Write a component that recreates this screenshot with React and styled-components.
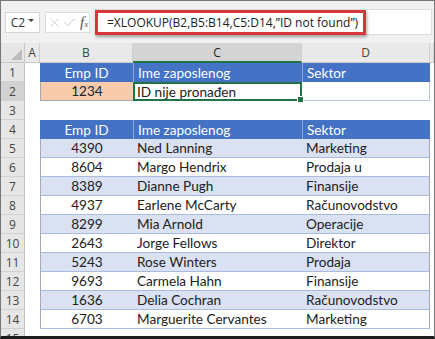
import React from 'react'
import styled, {createGlobalStyle} from 'styled-components'
import {X, Check} from 'lucide-react'

const GlobalStyle = createGlobalStyle`
    html, body {
        margin: 0;
        padding: 0;
        background: #fff;
    }
    * {
        box-sizing: border-box;
    }
`

const Frame = styled.div`
    width: 435px;
    height: 339px;
    overflow: hidden;
    border: 1px solid #777;
    border-bottom: 3px solid #1c1c1c;
    background: #fff;
    display: flex;
    flex-direction: column;
`

const FormulaBar = styled.div`
    height: 42px;
    flex: none;
    display: flex;
    align-items: center;
    padding: 0 2px 0 4px;
    background: #f1f1f1;
`

const NameBox = styled.div`
    width: 35px;
    height: 21px;
    display: flex;
    align-items: center;
    justify-content: center;
    gap: 3px;
    background: #fff;
    border: 1px solid #d6d6d6;
    font-family: 'Open Sans', sans-serif;
    font-size: 12px;
    color: #333;
`

const Caret = styled.span`
    width: 0;
    height: 0;
    border-left: 3px solid transparent;
    border-right: 3px solid transparent;
    border-top: 3px solid #444;
    margin-top: -4px;
`

const Dots = styled.span`
    width: 5px;
    text-align: center;
    color: #b8b8b8;
    font-family: 'DejaVu Sans', sans-serif;
    font-size: 12px;
`

const FxBox = styled.div`
    width: 45px;
    height: 21px;
    display: flex;
    align-items: center;
    padding-left: 1px;
    background: #fff;
    border: 1px solid #dcdcdc;
    color: #c8c8c8;
`

const Fx = styled.span`
    margin-left: 3px;
    font-family: 'Liberation Serif', serif;
    font-style: italic;
    font-size: 15px;
    color: #555;

    small {
        font-size: 9px;
    }
`

const FormulaInput = styled.div`
    flex: 1;
    height: 26px;
    margin-left: 5px;
    display: flex;
    align-items: center;
    background: #fff;
    border: 1px solid #dedede;
`

const Highlight = styled.div`
    height: 25px;
    margin-left: -1px;
    display: flex;
    align-items: center;
    padding: 0 5px 0 9px;
    border: 3px solid #d8363c;
    box-shadow: 1px 2px 3px rgba(0, 0, 0, .35);
    font-family: 'Open Sans', sans-serif;
    font-size: 12px;
    color: #222;
    white-space: nowrap;
`

const Sheet = styled.div`
    display: grid;
    grid-template-columns: 24px 15px 93px 169px 128px 1fr;
    grid-template-rows: 20px;
    grid-auto-rows: 19px;
    font-family: Lato, 'Liberation Sans', sans-serif;
    font-size: 13.6px;
    color: #222;
`

const Corner = styled.div`
    position: relative;
    background: #e6e6e6;
    border-right: 1px solid #c9c9c9;
    border-bottom: 1px solid #c9c9c9;

    &::after {
        content: '';
        position: absolute;
        right: 2px;
        bottom: 2px;
        border-left: 11px solid transparent;
        border-bottom: 11px solid #bdbdbd;
    }
`

const ColHead = styled.div`
    display: flex;
    align-items: center;
    justify-content: center;
    background: ${p => p.$active ? '#d4d4d4' : '#e9e9e9'};
    border-right: 1px solid #cfcfcf;
    border-bottom: ${p => p.$active ? '2px solid #217346' : '1px solid #c9c9c9'};
    font-family: 'Open Sans', sans-serif;
    font-size: 12px;
    color: ${p => p.$active ? '#222' : '#444'};
`

const RowHead = styled.div`
    display: flex;
    align-items: center;
    justify-content: center;
    background: ${p => p.$active ? '#d2d2d2' : '#e6e6e6'};
    border-right: 1px solid #c3c3c3;
    border-bottom: 1px solid #d2d2d2;
    font-family: 'Open Sans', sans-serif;
    font-size: 12px;
    color: #444;
`

const Blank = styled.div`
    background: #fff;
`

const HeadCell = styled.div`
    display: flex;
    align-items: center;
    justify-content: ${p => p.$center ? 'center' : 'flex-start'};
    padding-left: ${p => p.$center ? '0' : '4px'};
    background: #4472c4;
    color: #fff;
    border-left: ${p => p.$split ? '1px solid #8fa9da' : 'none'};
    white-space: nowrap;
`

const BodyCell = styled.div`
    display: flex;
    align-items: center;
    justify-content: ${p => p.$center ? 'center' : 'flex-start'};
    padding-left: ${p => p.$center ? '0' : '4px'};
    background: ${p => p.$band ? '#d9e1f2' : '#fff'};
    border-bottom: 1px solid #a9bcdf;
    border-left: ${p => p.$first ? '1px solid #a3a9b4' : 'none'};
    border-right: ${p => p.$last ? '1px solid #a3a9b4' : 'none'};
    white-space: nowrap;
    overflow: hidden;
`

const LookupCell = styled.div`
    display: flex;
    align-items: center;
    justify-content: center;
    background: #f8cbad;
    border-left: 1px solid #a9a9a9;
    border-bottom: 1px solid #a9a9a9;
`

const SelectedCell = styled.div`
    position: relative;
    display: flex;
    align-items: center;
    padding-left: 2px;
    background: #fff;
    border: 2px solid #217346;

    &::after {
        content: '';
        position: absolute;
        right: -4px;
        bottom: -4px;
        width: 5px;
        height: 5px;
        background: #217346;
        border: 1px solid #fff;
    }
`

const EmptyCell = styled.div`
    background: #fff;
    border-right: 1px solid #b9c6dd;
    border-bottom: 1px solid #b9c6dd;
`

const employees = [
    ['4390', 'Ned Lanning', 'Marketing'],
    ['8604', 'Margo Hendrix', 'Prodaja u'],
    ['8389', 'Dianne Pugh', 'Finansije'],
    ['4937', 'Earlene McCarty', 'Računovodstvo'],
    ['8299', 'Mia Arnold', 'Operacije'],
    ['2643', 'Jorge Fellows', 'Direktor'],
    ['5243', 'Rose Winters', 'Prodaja'],
    ['9693', 'Carmela Hahn', 'Finansije'],
    ['1636', 'Delia Cochran', 'Računovodstvo'],
    ['6703', 'Marguerite Cervantes', 'Marketing'],
]

const TableHeader = () => (
    <>
        <HeadCell $center>Emp ID</HeadCell>
        <HeadCell $split>Ime zaposlenog</HeadCell>
        <HeadCell $split>Sektor</HeadCell>
    </>
)

export default function App() {
    return (
        <>
            <GlobalStyle/>
            <Frame>
                <FormulaBar>
                    <NameBox>C2<Caret/></NameBox>
                    <Dots>⋮</Dots>
                    <FxBox>
                        <X size={15} strokeWidth={1.4}/>
                        <Check size={15} strokeWidth={1.6}/>
                        <Fx>f<small>x</small></Fx>
                    </FxBox>
                    <FormulaInput>
                        <Highlight>=XLOOKUP(B2,B5:B14,C5:D14,”ID not found”)</Highlight>
                    </FormulaInput>
                </FormulaBar>

                <Sheet>
                    <Corner/>
                    <ColHead>A</ColHead>
                    <ColHead>B</ColHead>
                    <ColHead $active>C</ColHead>
                    <ColHead>D</ColHead>
                    <ColHead/>

                    <RowHead>1</RowHead>
                    <Blank/>
                    <TableHeader/>
                    <Blank/>

                    <RowHead $active>2</RowHead>
                    <Blank/>
                    <LookupCell>1234</LookupCell>
                    <SelectedCell>ID nije pronađen</SelectedCell>
                    <EmptyCell/>
                    <Blank/>

                    <RowHead>3</RowHead>
                    <Blank/><Blank/><Blank/><Blank/><Blank/>

                    <RowHead>4</RowHead>
                    <Blank/>
                    <TableHeader/>
                    <Blank/>

                    {employees.map(([id, name, dept], i) => (
                        <React.Fragment key={id}>
                            <RowHead>{i + 5}</RowHead>
                            <Blank/>
                            <BodyCell $center $first $band={i % 2 === 0}>{id}</BodyCell>
                            <BodyCell $band={i % 2 === 0}>{name}</BodyCell>
                            <BodyCell $last $band={i % 2 === 0}>{dept}</BodyCell>
                            <Blank/>
                        </React.Fragment>
                    ))}

                    <RowHead>15</RowHead>
                    <Blank/><Blank/><Blank/><Blank/><Blank/>
                </Sheet>
            </Frame>
        </>
    )
}
